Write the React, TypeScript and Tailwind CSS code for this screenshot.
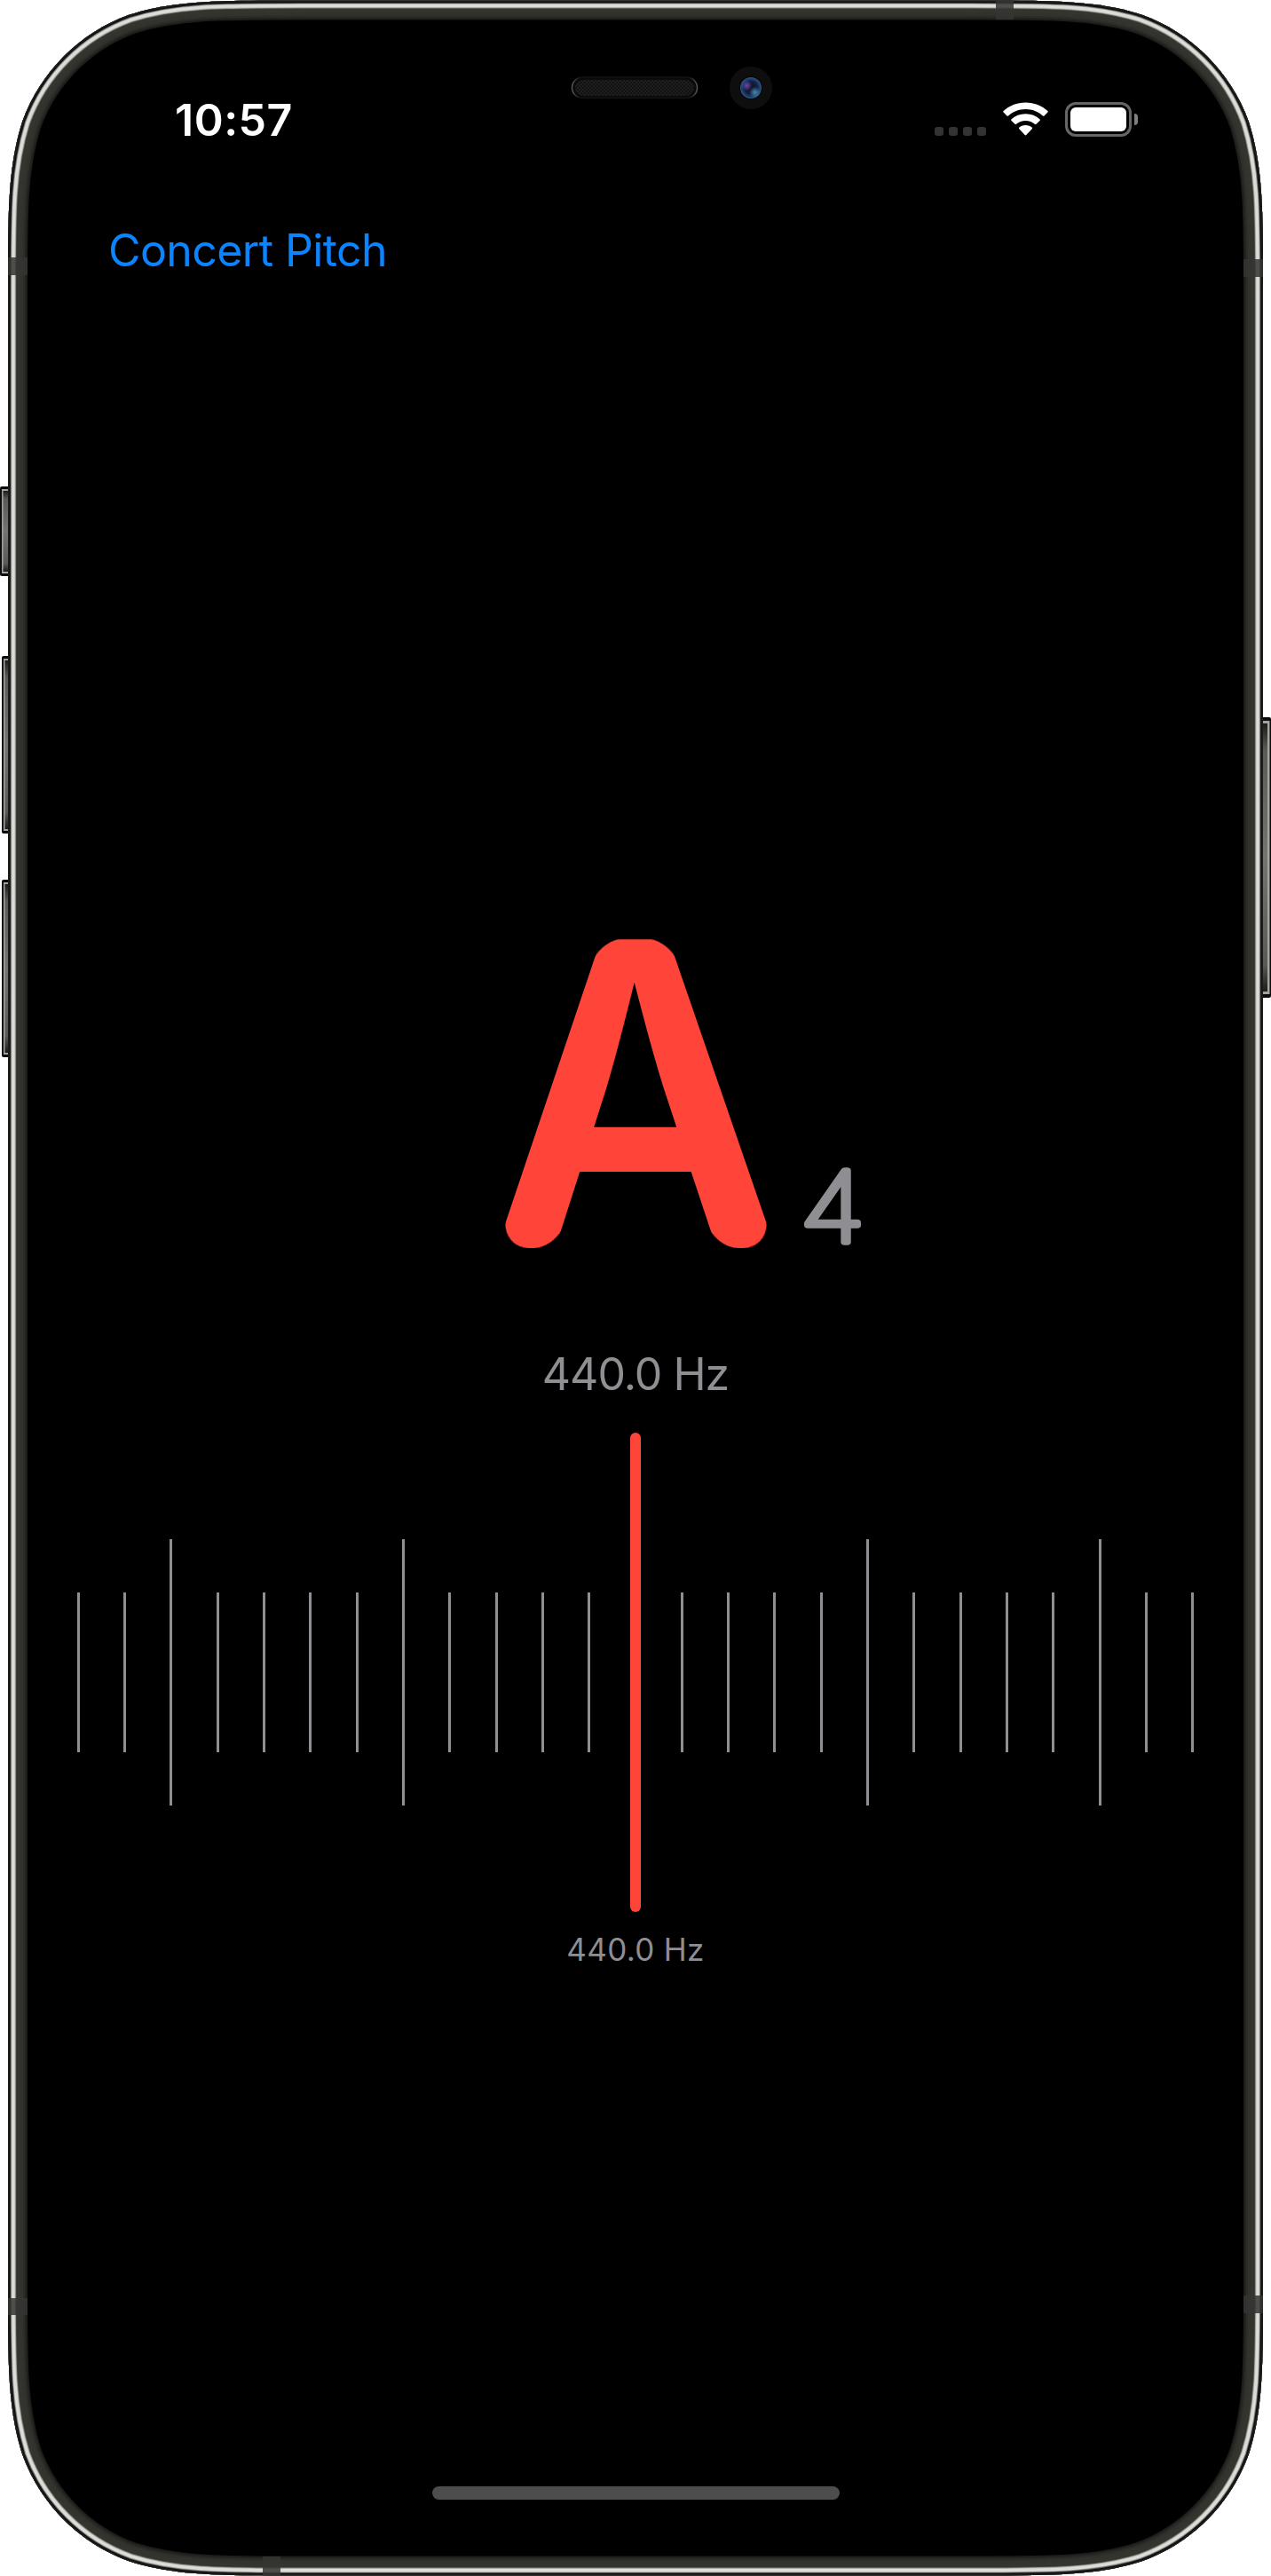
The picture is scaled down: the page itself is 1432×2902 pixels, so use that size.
import React from "react";

const OUTLINE =
  "M339 .5H1093C1188.200 .5 1235.700 .5 1286.600 16.700C1342.500 37 1386.500 81 1406.800 136.900C1423 188 1423 235.600 1423 330.700V2571.300C1423 2666.400 1423 2714 1406.800 2765.100C1386.500 2821 1342.500 2865 1286.600 2885.300C1235.700 2901.500 1188.200 2901.500 1093 2901.500H339C243.800 2901.500 196.300 2901.500 145.400 2885.300C89.500 2865 45.500 2821 25.200 2765.100C9 2714 9 2666.400 9 2571.300V330.700C9 235.600 9 188 25.200 136.900C45.500 81 89.500 37 145.400 16.700C196.300 .5 243.800 .5 339 .5Z";

// Concentric rings of the steel band: [stroke width, colour], outermost depth first.
const RINGS: [number, string][] = [
  [44, "#1c1c1a"],
  [41, "#242421"],
  [38, "#2c2c28"],
  [34, "#33332e"],
  [27, "#353530"],
  [21, "#33332f"],
  [19, "#4c4c48"],
  [17.5, "#8c8c88"],
  [16.5, "#b8b9b4"],
  [15, "#dcddd7"],
  [8.5, "#a8a8a4"],
  [7, "#5c5c5a"],
  [5.5, "#101010"],
  [3, "#1d1d1e"],
];

const BANDS = [
  [9, 290, 22, 20],
  [1401, 292, 22, 20],
  [9, 2589, 22, 19],
  [1401, 2586, 22, 20],
  [1122, 0, 20, 22],
  [296, 2880, 20, 22],
];

function Shell() {
  return (
    <svg className="absolute inset-0" width="1432" height="2902" viewBox="0 0 1432 2902" aria-hidden="true">
      <defs>
        <clipPath id="body">
          <path d={OUTLINE} />
        </clipPath>
        <linearGradient id="key" x1="0" y1="0" x2="0" y2="1">
          <stop offset="0" stopColor="#1c1c1a" />
          <stop offset="0.1" stopColor="#5a5a58" />
          <stop offset="0.5" stopColor="#747472" />
          <stop offset="0.9" stopColor="#5a5a58" />
          <stop offset="1" stopColor="#1c1c1a" />
        </linearGradient>
        <pattern id="mesh" width="4" height="4" patternUnits="userSpaceOnUse">
          <rect width="4" height="4" fill="#121212" />
          <rect width="2" height="2" fill="#1f1f1f" />
          <rect x="2" y="2" width="2" height="2" fill="#1f1f1f" />
        </pattern>
        <linearGradient id="rim" x1="0" y1="0" x2="1" y2="0">
          <stop offset="0" stopColor="#5a5a5a" />
          <stop offset="0.06" stopColor="#121212" />
          <stop offset="0.94" stopColor="#121212" />
          <stop offset="1" stopColor="#5a5a5a" />
        </linearGradient>
        <radialGradient id="violet">
          <stop offset="0" stopColor="#6b4aa8" />
          <stop offset="1" stopColor="#6b4aa8" stopOpacity="0" />
        </radialGradient>
        <radialGradient id="cyan">
          <stop offset="0" stopColor="#468cae" />
          <stop offset="1" stopColor="#468cae" stopOpacity="0" />
        </radialGradient>
        <radialGradient id="lens">
          <stop offset="0" stopColor="#0c1024" />
          <stop offset="0.6" stopColor="#131f42" />
          <stop offset="1" stopColor="#2c5688" />
        </radialGradient>
      </defs>
      {[
        [0, 548, 101],
        [2, 739, 200],
        [2, 991, 200],
      ].map(([x, y, h]) => (
        <g key={y}>
          <rect x={x} y={y} width="16" height={h} rx="2" fill="#0c0c0c" />
          <rect x={x + 2} y={y + 3} width="14" height={h - 6} fill="#a3a39e" />
          <rect x={x + 3.5} y={y + 5} width="14" height={h - 10} fill="url(#key)" />
        </g>
      ))}
      <rect x="1416" y="808" width="16" height="316" rx="2" fill="#0c0c0c" />
      <rect x="1416" y="812" width="14.5" height="308" fill="#a3a39e" />
      <rect x="1416" y="815" width="12" height="302" fill="url(#key)" />
      <g clipPath="url(#body)">
        <path d={OUTLINE} fill="#000" />
        {RINGS.map(([w, c]) => (
          <path key={w} d={OUTLINE} fill="none" stroke={c} strokeWidth={w} />
        ))}
        {BANDS.map(([x, y, w, h]) => (
          <rect key={`${x}-${y}`} x={x} y={y} width={w} height={h} fill="#353533" fillOpacity="0.85" />
        ))}
      </g>
      <rect x="644.5" y="87" width="141" height="23.5" rx="11.75" fill="#0a0a0a" stroke="url(#rim)" strokeWidth="1.5" />
      <rect x="648" y="90" width="134" height="18" rx="9" fill="url(#mesh)" />
      <circle cx="846" cy="99" r="24" fill="#0e0e0e" />
      <circle cx="846" cy="99" r="13" fill="#050505" />
      <circle cx="846" cy="99" r="12" fill="url(#lens)" />
      <circle cx="841.5" cy="96.5" r="6" fill="url(#violet)" />
      <circle cx="850.5" cy="104" r="6.5" fill="url(#cyan)" />
    </svg>
  );
}

function Wifi() {
  return (
    <svg className="ml-[19px] h-[38px] w-[51px]" viewBox="0 0 51 38" fill="#fff" aria-hidden="true">
      <path d="M25.500 .5C35.300 .5 44 4.100 50.400 10Q51.200 10.800 50.400 11.600L46.500 15.400Q45.700 16.200 44.900 15.400C39.700 10.700 33 8 25.500 8S11.300 10.700 6.100 15.400Q5.300 16.200 4.500 15.400L.6 11.600Q-.2 10.800 .6 10C7 4.100 15.700 .5 25.500 .5Z" />
      <path d="M25.500 13.200C31.800 13.200 37.300 15.400 41.500 19.300Q42.300 20.100 41.500 20.900L37.500 24.800Q36.700 25.500 35.900 24.800C33.100 22.300 29.500 20.900 25.500 20.900S17.900 22.300 15.100 24.800Q14.300 25.500 13.500 24.800L9.500 20.900Q8.700 20.100 9.500 19.300C13.700 15.400 19.200 13.200 25.500 13.200Z" />
      <path d="M25.500 26C28.400 26 30.800 27 32.700 28.600Q33.500 29.400 32.700 30.200L26.300 37Q25.500 37.800 24.700 37L18.300 30.200Q17.500 29.400 18.300 28.600C20.200 27 22.600 26 25.500 26Z" />
    </svg>
  );
}

function StatusBar() {
  return (
    <header className="flex h-[200px] shrink-0 items-start pr-[150px] pl-[197px]">
      <time className="mt-[105px] text-[50px] leading-[60px] font-semibold tracking-[0.5px] text-white">10:57</time>
      <div className="mt-[115px] ml-auto flex h-[39px]">
        <div className="flex items-end gap-[6px] pb-px">
          {[0, 1, 2, 3].map((i) => (
            <span key={i} className="size-[10px] rounded-[3px] bg-[#333333]" />
          ))}
        </div>
        <Wifi />
        <div className="ml-[19px] flex items-center gap-[3px]">
          <div className="h-[39px] w-[75px] rounded-[12px] border-[3px] border-[#666666] p-[3px]">
            <div className="h-full w-full rounded-[6px] bg-white" />
          </div>
          <div className="h-[13px] w-[4px] rounded-r-full bg-[#808080]" />
        </div>
      </div>
    </header>
  );
}

function Note() {
  return (
    <svg
      className="mx-auto block overflow-visible"
      width="560"
      height="540"
      viewBox="436 960 560 540"
      strokeLinejoin="round"
      strokeLinecap="round"
      role="img"
      aria-label="A4"
    >
      <defs>
        {/* Rounds the outer corners of a letter and keeps its inner corners sharp. */}
        <filter id="rounded" filterUnits="userSpaceOnUse" x="500" y="980" width="432" height="500" colorInterpolationFilters="sRGB">
          <feGaussianBlur in="SourceAlpha" stdDeviation="22" />
          <feComponentTransfer result="soft">
            <feFuncA type="linear" slope="40" intercept="-16.9" />
          </feComponentTransfer>
          <feComposite in="SourceGraphic" in2="soft" operator="in" />
        </filter>
      </defs>
      <g filter="url(#rounded)">
        <text transform="translate(716.5 1406) scale(0.965 1)" textAnchor="middle" fontSize="478" fontWeight="600" fill="#ff453a">
          A
        </text>
      </g>
      <text
        transform="translate(938 1398.5) scale(1.13 1)"
        textAnchor="middle"
        fontSize="110"
        fontWeight="100"
        fill="#8e8e93"
        stroke="#8e8e93"
        strokeWidth="7.5"
      >
        4
      </text>
    </svg>
  );
}

function Gauge() {
  return (
    <div className="grid h-[540px] w-full items-center">
      <div className="col-start-1 row-start-1 ml-[86.7px] flex w-[1258.6px] items-center justify-between">
        {Array.from({ length: 25 }, (_, i) =>
          i % 5 === 2 ? (
            <i key={i} className="h-[300px] w-[3px] bg-[#8e8e93]" />
          ) : (
            <i key={i} className="h-[180px] w-[3px] bg-[#8e8e93]" />
          ),
        )}
      </div>
      <div className="z-10 col-start-1 row-start-1 h-[540px] w-[12px] justify-self-center rounded-full bg-[#ff453a]" />
    </div>
  );
}

export default function App() {
  return (
    <div className="relative h-[2902px] w-[1432px] bg-white font-['Inter',sans-serif]">
      <Shell />
      <div className="relative flex h-full flex-col">
        <StatusBar />
        <nav className="pl-[122px]">
          <button className="mt-[52px] block text-[50px] leading-[60px] tracking-[-0.6px] text-[#0a84ff]">Concert Pitch</button>
        </nav>
        <main className="flex flex-1 flex-col items-center pt-[648px]">
          <Note />
          <p className="mt-[18px] h-[60px] text-[50px] leading-[60px] tracking-[-1px] text-[#8e8e93]">440.0 Hz</p>
          <div className="mt-[36px] w-full">
            <Gauge />
          </div>
          <p className="mt-[21px] text-[35px] leading-[42px] tracking-[0.3px] text-[#8e8e93]">440.0 Hz</p>
        </main>
        <div className="mb-[86px] h-[15px] w-[459px] self-center rounded-full bg-[#4d4d4d]" />
      </div>
    </div>
  );
}
